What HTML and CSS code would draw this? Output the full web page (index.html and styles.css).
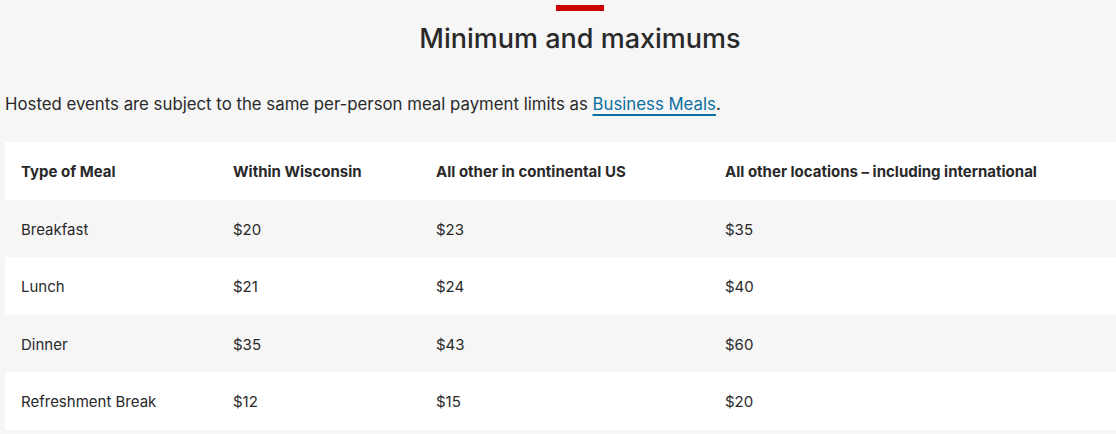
FILE: index.html
```html
<!DOCTYPE html>
<html lang="en">
<head>
<meta charset="utf-8">
<title>Minimum and maximums</title>
<link rel="stylesheet" href="styles.css">
</head>
<body>
<div class="page">
  <section class="content">
    <div class="accent"></div>
    <h2 class="title">Minimum and maximums</h2>
    <p class="intro">Hosted events are subject to the same per-person meal payment limits as <a class="link" href="#">Business Meals</a>.</p>
    <table class="meals">
      <thead>
        <tr>
          <th class="c1">Type of Meal</th>
          <th class="c2">Within Wisconsin</th>
          <th class="c3">All other in continental US</th>
          <th class="c4">All other locations – including international</th>
        </tr>
      </thead>
      <tbody>
        <tr><td>Breakfast</td><td>$20</td><td>$23</td><td>$35</td></tr>
        <tr><td>Lunch</td><td>$21</td><td>$24</td><td>$40</td></tr>
        <tr><td>Dinner</td><td>$35</td><td>$43</td><td>$60</td></tr>
        <tr><td>Refreshment Break</td><td>$12</td><td>$15</td><td>$20</td></tr>
      </tbody>
    </table>
  </section>
</div>
</body>
</html>
```
FILE: styles.css
```css
html, body {
  margin: 0;
  padding: 0;
  background: #f6f6f6;
  overflow: hidden;
}
.page {
  width: 1150px;
  padding-left: 5px;
  font-family: "Inter", "Liberation Sans", sans-serif;
  color: #292929;
}
.content {
  display: flex;
  flex-direction: column;
}
.accent {
  width: 48px;
  height: 6px;
  margin: 5px auto 0;
  background: #cc0000;
}
.title {
  margin: 11px 0 0;
  text-align: center;
  font-size: 27px;
  line-height: 34px;
  font-weight: 500;
  color: #292929;
}
.intro {
  margin: 35px 0 0;
  font-size: 16.8px;
  line-height: 26px;
  color: #292929;
}
.link {
  color: #0b6fa0;
  text-decoration: underline;
  text-decoration-thickness: 2px;
  text-underline-offset: 4px;
}
.meals {
  margin-top: 25px;
  width: 100%;
  border-collapse: collapse;
  font-size: 15px;
  line-height: 22px;
}
.meals th, .meals td {
  text-align: left;
  padding: 19px 16px 16.5px;
  vertical-align: middle;
}
.meals th {
  font-weight: 700;
  background: #ffffff;
}
.meals tbody tr:nth-child(odd) td {
  background: #f6f6f6;
}
.meals tbody tr:nth-child(even) td {
  background: #ffffff;
}
.c1 { width: 180px; }
.c2 { width: 171px; }
.c3 { width: 257px; }
```
